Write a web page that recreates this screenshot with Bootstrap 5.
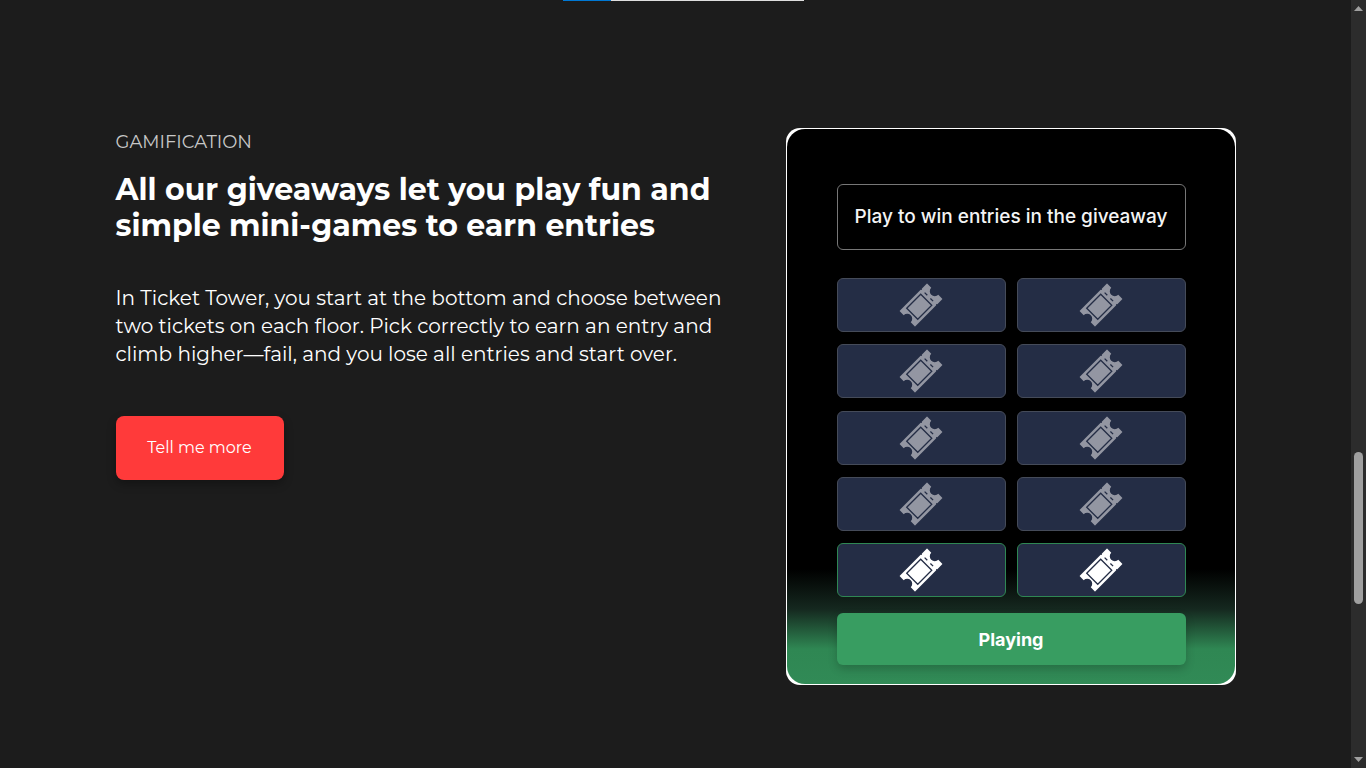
<!DOCTYPE html>
<html lang="en">
<head>
<meta charset="utf-8">
<meta name="viewport" content="width=device-width, initial-scale=1">
<title>Gamification</title>
<link rel="stylesheet" href="https://cdn.jsdelivr.net/npm/bootstrap@5.3.0/dist/css/bootstrap.min.css">
<style>
  body { background: #1c1c1c; color: #fff; font-family: Montserrat, Inter, sans-serif; }
  .feature { max-width: 1120px; padding-top: 128px; padding-bottom: 83px; }
  .copy { max-width: 612px; }
  .eyebrow { font-size: 18px; line-height: 28px; color: #c8c8c8; }
  .headline { font-size: 30px; line-height: 36px; font-weight: 700; margin: 16px 0 40px; }
  .blurb { font-size: 20px; line-height: 28px; margin-bottom: 48px; }
  .btn-tell { background: #ff3a3a; color: #fff; font-size: 16px; width: 168px; height: 64px; border-radius: 8px; box-shadow: 0 4px 10px rgba(0,0,0,.3); }
  .btn-tell:hover { background: #e83232; color: #fff; }
  .game-frame { width: 450px; background: #fff; border-radius: 14px; padding: 1px; }
  .game { font-family: Inter, sans-serif; border-radius: 18px; padding: 55px 49px 19px 50px; background: linear-gradient(#000 0, #000 440px, #15281f 480px, #2f8753 520px, #318a56 100%); }
  .prompt { height: 66px; border: 1px solid #777; border-radius: 6px; font-size: 19px; font-weight: 500; color: #f4f4f4; margin-bottom: 28px; }
  .tower { display: grid; grid-template-columns: 1fr 1fr; column-gap: 11px; align-content: space-between; height: 319px; margin-bottom: 16px; }
  .tile { height: 54px; background: #242d45; border: 1px solid #454b59; border-radius: 6px; color: #9396a2; padding: 0; }
  .tile.live { border-color: #2f8753; color: #fff; }
  .tile svg { width: 44px; height: 44px; display: block; margin: 0 auto; }
  .btn-play { height: 52px; background: #389d61; color: #fff; font-size: 18px; font-weight: 700; border-radius: 6px; box-shadow: 0 4px 10px rgba(0,0,0,.2); }
  .rail { width: 15px; height: 100vh; padding: 6px 0; background: #2c2c2c; }
  .rail svg { width: 9px; height: 5px; fill: #a0a0a0; }
  .track { padding-bottom: 153px; }
  .thumb { width: 9px; height: 152px; border-radius: 5px; background: #a0a0a0; }
  .drag-bar { width: 241px; height: 1px; background: #dedede; }
  .drag-bar div { width: 20%; background: #0078d4; }
</style>
</head>
<body>
<svg class="d-none" aria-hidden="true">
  <symbol id="ticket" viewBox="-22 -22 44 44">
    <g transform="rotate(-45)">
      <path fill="currentColor" d="M-19-11H10.5L11.3-10L12.100-11H19Q19.500-11 19.500-10.500V-5A5 5 0 0 0 19.500 5V10.500Q19.500 11 19 11H12.100L11.300 10L10.500 11H-19Q-19.500 11-19.500 10.500V5A5 5 0 0 0-19.500-5V-10.500Q-19.500-11-19-11Z"/>
      <path fill="none" stroke="#242d45" stroke-width="1.3" d="M-12.4-7.8H7.4V7.8H-12.4ZM11.3-6.2V-2.4M11.3 2V5.8"/>
    </g>
  </symbol>
</svg>
<div class="fixed-top d-flex justify-content-center"><div class="drag-bar d-flex"><div></div></div></div>
<div class="d-flex align-items-start">
  <main class="flex-grow-1">
    <section class="feature mx-auto d-flex flex-wrap flex-lg-nowrap justify-content-between align-items-start">
      <div class="copy">
        <div class="eyebrow">GAMIFICATION</div>
        <h2 class="headline">All our giveaways let you play fun and simple mini-games to earn entries</h2>
        <p class="blurb">In Ticket Tower, you start at the bottom and choose between two tickets on each floor. Pick correctly to earn an entry and climb higher—fail, and you lose all entries and start over.</p>
        <button type="button" class="btn btn-tell border-0">Tell me more</button>
      </div>
      <div class="game-frame flex-shrink-0">
        <div class="game">
          <div class="prompt d-flex align-items-center justify-content-center text-nowrap">Play to win entries in the giveaway</div>
          <div class="tower">
            <button type="button" class="tile" aria-label="Ticket"><svg><use href="#ticket"/></svg></button>
            <button type="button" class="tile" aria-label="Ticket"><svg><use href="#ticket"/></svg></button>
            <button type="button" class="tile" aria-label="Ticket"><svg><use href="#ticket"/></svg></button>
            <button type="button" class="tile" aria-label="Ticket"><svg><use href="#ticket"/></svg></button>
            <button type="button" class="tile" aria-label="Ticket"><svg><use href="#ticket"/></svg></button>
            <button type="button" class="tile" aria-label="Ticket"><svg><use href="#ticket"/></svg></button>
            <button type="button" class="tile" aria-label="Ticket"><svg><use href="#ticket"/></svg></button>
            <button type="button" class="tile" aria-label="Ticket"><svg><use href="#ticket"/></svg></button>
            <button type="button" class="tile live" aria-label="Ticket"><svg><use href="#ticket"/></svg></button>
            <button type="button" class="tile live" aria-label="Ticket"><svg><use href="#ticket"/></svg></button>
          </div>
          <button type="button" class="btn btn-play border-0 w-100">Playing</button>
        </div>
      </div>
    </section>
  </main>
  <div class="rail sticky-top flex-shrink-0 d-flex flex-column align-items-center" aria-hidden="true">
    <svg class="flex-shrink-0" viewBox="0 0 9 5"><path d="M0 5L4.500 0L9 5Z"/></svg>
    <div class="track flex-grow-1 d-flex align-items-end"><div class="thumb"></div></div>
    <svg class="flex-shrink-0" viewBox="0 0 9 5"><path d="M0 0L4.500 5L9 0Z"/></svg>
  </div>
</div>
<script src="https://cdn.jsdelivr.net/npm/bootstrap@5.3.0/dist/js/bootstrap.bundle.min.js"></script>
</body>
</html>
